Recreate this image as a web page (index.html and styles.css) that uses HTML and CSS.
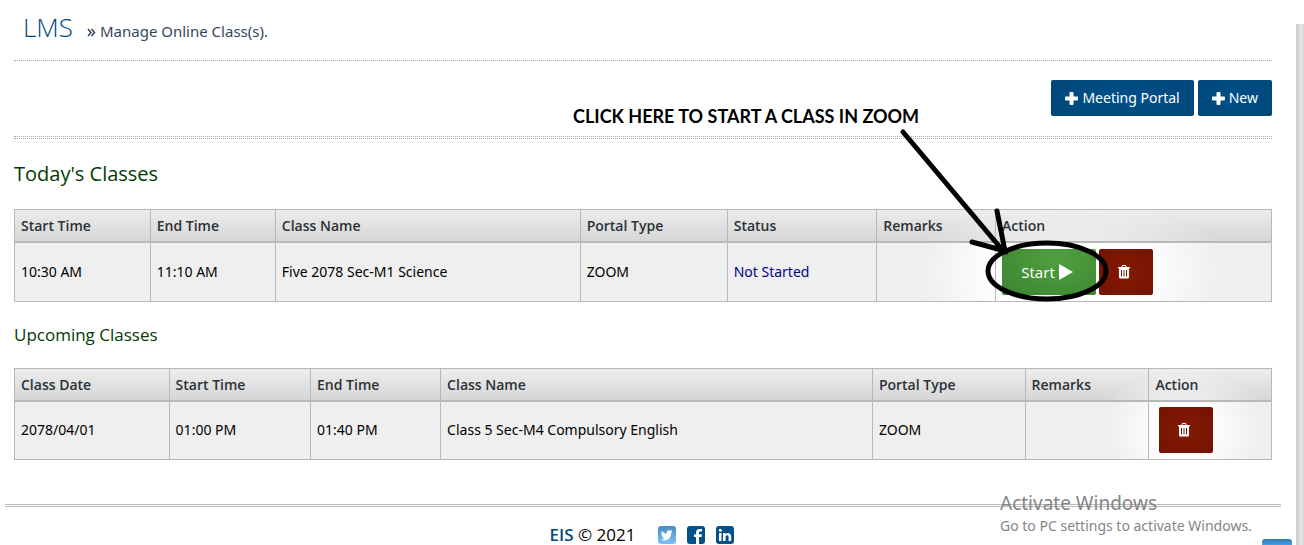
FILE: index.html
```html
<!DOCTYPE html>
<html lang="en">
<head>
<meta charset="utf-8">
<title>LMS - Manage Online Class(s)</title>
<link rel="stylesheet" href="styles.css">
</head>
<body>
<svg class="defs" aria-hidden="true">
  <symbol id="plus" viewBox="0 0 13 13"><path fill="currentColor" d="M4.500 1q0-1 1-1h2q1 0 1 1v3.500H12q1 0 1 1v2q0 1-1 1H8.500V12q0 1-1 1h-2q-1 0-1-1V8.500H1q-1 0-1-1v-2q0-1 1-1h3.500z"/></symbol>
  <symbol id="trash" viewBox="0 0 12 14"><path fill="currentColor" fill-rule="evenodd" d="M4.300 0h3.400l1 2H12v1.300h-1V12q0 1.500-1.400 1.500H2.400Q1 13.500 1 12V3.300H0V2h3.300zM4.900 1l-.5 1h3.200l-.5-1zM3 5v6.500h1V5zm2.500 0v6.500h1V5zM8 5v6.500h1V5z"/></symbol>
</svg>
<div class="page">
  <main class="content">
    <header class="heading">
      <h1>LMS</h1>
      <p class="crumb"><svg class="chevrons" viewBox="0 0 9 9" aria-hidden="true"><path d="M1 1l3 3.500L1 8M4.500 1l3 3.500-3 3.500"/></svg>Manage Online Class(s).</p>
    </header>
    <div class="toolbar">
      <button class="btn"><svg viewBox="0 0 13 13" aria-hidden="true"><use href="#plus"/></svg>Meeting Portal</button>
      <button class="btn"><svg viewBox="0 0 13 13" aria-hidden="true"><use href="#plus"/></svg>New</button>
    </div>
    <h2>Today's Classes</h2>
    <table class="today">
      <colgroup><col class="t1"><col class="t2"><col class="t3"><col class="t4"><col class="t5"><col class="t6"><col></colgroup>
      <thead><tr><th>Start Time</th><th>End Time</th><th>Class Name</th><th>Portal Type</th><th>Status</th><th>Remarks</th><th>Action</th></tr></thead>
      <tbody><tr><td>10:30 AM</td><td>11:10 AM</td><td>Five 2078 Sec-M1 Science</td><td>ZOOM</td><td class="status">Not Started</td><td></td>
        <td><div class="actions">
          <button class="btn start">Start<svg viewBox="0 0 14 16" aria-hidden="true"><path fill="currentColor" d="M0 0l14 8-14 8z"/></svg></button>
          <button class="btn delete" aria-label="Delete class"><svg viewBox="0 0 12 14" aria-hidden="true"><use href="#trash"/></svg></button>
          <div class="callout">
            <p>CLICK HERE TO START A CLASS IN ZOOM</p>
            <svg viewBox="0 0 240 180" aria-hidden="true"><path d="M33 10L134 130M102 120l33 9-8-40"/><ellipse cx="177" cy="149" rx="59" ry="28"/></svg>
          </div>
        </div></td></tr></tbody>
    </table>
    <h3>Upcoming Classes</h3>
    <table class="upcoming">
      <colgroup><col class="u1"><col class="u2"><col class="u3"><col class="u4"><col class="u5"><col class="u6"><col></colgroup>
      <thead><tr><th>Class Date</th><th>Start Time</th><th>End Time</th><th>Class Name</th><th>Portal Type</th><th>Remarks</th><th>Action</th></tr></thead>
      <tbody><tr><td>2078/04/01</td><td>01:00 PM</td><td>01:40 PM</td><td>Class 5 Sec-M4 Compulsory English</td><td>ZOOM</td><td></td>
        <td><div class="actions inset"><button class="btn delete" aria-label="Delete class"><svg viewBox="0 0 12 14" aria-hidden="true"><use href="#trash"/></svg></button></div></td></tr></tbody>
    </table>
  </main>
  <footer class="footer">
    <span><b>EIS</b> © 2021</span>
    <div class="social">
      <a href="#" aria-label="Twitter"><svg viewBox="0 0 18 18"><defs><linearGradient id="tw" x2="0" y2="1"><stop stop-color="#488fbd"/><stop offset="1" stop-color="#7cc0ff"/></linearGradient></defs><rect width="18" height="18" rx="3" fill="url(#tw)"/><path fill="#fff" d="M14.500 5.500l-1.300 1.400c.1 4.500-3 7.500-6.500 7.500-1.400 0-2.500-.4-3.500-1 1.300 0 2.300-.3 3.200-1-1.100-.2-1.800-.8-2.100-1.700h1C4 10.200 3.400 9.300 3.400 8l1 .3C3.300 7.300 3.200 6 3.800 4.900c1.400 1.600 3 2.500 5 2.600-.3-2 .5-3.300 2.200-3.300.7 0 1.200.2 1.600.6l1.500-.5-.8 1.300z"/></svg></a>
      <a href="#" aria-label="Facebook"><svg viewBox="0 0 18 18"><rect width="18" height="18" rx="3" fill="#00508a"/><path fill="#fff" d="M9 18v-7H7V8.300h2V6.500C9 4.300 10.300 3 12.500 3H15v2.600h-1.600c-1 0-1.400.4-1.400 1.200v1.500h2.900l-.4 2.700H12v7z"/></svg></a>
      <a href="#" aria-label="LinkedIn"><svg viewBox="0 0 18 18"><rect width="18" height="18" rx="3" fill="#00508a"/><path fill="#fff" d="M3 7h2.500v8H3zM7 7h2.400v1.200C11 6 15.200 6.500 15.200 10.500V15h-2.600v-4.200c0-2.300-3-2.100-3 0V15H7z"/><circle cx="4.250" cy="4.200" r="1.500" fill="#fff"/></svg></a>
    </div>
  </footer>
  <div class="scrollbar"></div>
  <button class="to-top" aria-label="Back to top"></button>
  <div class="watermark"><p class="wm-title">Activate Windows</p><p>Go to PC settings to activate Windows.</p></div>
</div>
</body>
</html>
```
FILE: styles.css
```css
* { box-sizing: border-box; }
html, body { margin: 0; }
body {
  height: 100vh;
  overflow: hidden;
  background: #fff;
  color: #000;
  font: 14px/20px "Open Sans", "Noto Sans", sans-serif;
}
.defs { position: absolute; width: 0; height: 0; }
.page { position: relative; height: 100vh; overflow: hidden; }
.content { padding: 0 32px 0 14px; }
h1, h2, h3, p { margin: 0; font-weight: 400; }
.heading {
  display: flex;
  align-items: baseline;
  gap: 14px;
  padding: 9px 9px 15px;
  border-bottom: 1px dotted #aaa;
}
h1 { color: #004a7f; font-size: 26px; font-weight: 300; line-height: 36px; }
.crumb { color: #33475c; font-family: "Noto Sans", sans-serif; font-size: 15px; }
.chevrons { width: 9px; height: 9px; margin-right: 4px; fill: none; stroke: #33475c; stroke-width: 1.500; }
.toolbar {
  display: flex;
  justify-content: flex-end;
  gap: 4px;
  padding: 19px 0 20px;
  border-bottom: 1px dotted #aaa;
}
.btn {
  display: inline-flex;
  align-items: center;
  justify-content: center;
  gap: 4px;
  height: 36px;
  padding: 0 14px;
  border: 0;
  border-radius: 2px;
  background: radial-gradient(#00508a, #004678);
  color: #fff;
  font: 14px/20px "Noto Sans", sans-serif;
}
.btn svg { width: 13px; height: 13px; }
h2 {
  margin-top: 1px;
  padding: 22px 0;
  border-top: 1px dotted #aaa;
  color: #003c00;
  font-size: 20px;
  line-height: 26px;
}
h3 { padding: 21px 0; color: #003c00; font-size: 17px; line-height: 24px; }
table { width: 100%; border-collapse: collapse; table-layout: fixed; }
th, td { border: 1px solid #b8b8b8; padding: 0 6px; text-align: left; }
th { height: 32px; padding-top: 1px; border-bottom-width: 2px; color: #2b3236; font-weight: 600; }
td { height: 59px; font-family: "Noto Sans", sans-serif; }
.today td { height: 60px; }
thead tr { background: linear-gradient(#ededed, #d5d5d5); }
tbody tr { background: #efefef; }
.today thead tr { background: radial-gradient(180px 70px at 84% 200%, #fff, transparent), linear-gradient(#ededed, #d5d5d5); }
.today tbody tr { background: radial-gradient(150px 90px at 84% 50%, #fff 50%, #efefef); }
.upcoming thead tr { background: radial-gradient(90px 60px at 93% 180%, #fff, transparent), linear-gradient(#ededed, #d5d5d5); }
.upcoming tbody tr { background: radial-gradient(75px 80px at 93% 50%, #fff 30%, #efefef); }
.t1 { width: 10.8%; }
.t2 { width: 9.95%; }
.t3 { width: 24.25%; }
.t4 { width: 11.7%; }
.t5 { width: 11.9%; }
.t6 { width: 9.45%; }
.u1 { width: 12.3%; }
.u2 { width: 11.25%; }
.u3 { width: 10.35%; }
.u4 { width: 34.35%; }
.u5 { width: 12.15%; }
.u6 { width: 9.85%; }
.status { color: #00008b; }
.actions { position: relative; display: flex; gap: 3px; }
.inset { padding-left: 4px; }
.actions .btn { height: 46px; }
.actions .start { width: 94px; padding: 0 18px 0 14px; background: radial-gradient(at 60% 20%, #4f9f40, #3c8530); font-size: 15px; }
.start svg { width: 14px; height: 16px; }
.delete { width: 54px; padding-right: 18px; background: radial-gradient(#841a04, #741300); }
.delete svg { width: 12px; height: 14px; }
.callout { position: absolute; z-index: 1; top: -143px; left: -429px; width: 350px; pointer-events: none; }
.callout p { font: 700 18px/20px Lato, sans-serif; white-space: nowrap; }
.callout svg {
  position: absolute;
  top: 16px;
  left: 297px;
  width: 240px;
  height: 180px;
  fill: none;
  stroke: #000;
  stroke-width: 5;
  stroke-linecap: round;
}
.footer {
  display: flex;
  align-items: center;
  justify-content: center;
  gap: 23px;
  margin: 44px 23px 0 5px;
  padding-top: 18px;
  border-top: 3px double #bbb;
  font-size: 17px;
  line-height: 20px;
}
.footer > span { margin-left: -2px; }
.footer b { color: #004a7f; font-weight: 600; }
.social { display: flex; gap: 11px; }
.social a, .social svg { display: block; width: 18px; height: 18px; }
.scrollbar { position: absolute; top: 24px; right: 0; bottom: 0; width: 8px; background: linear-gradient(90deg, #ccc, #eaeaea 6px, #ccc 7px, #eee); }
.to-top { position: absolute; right: 12px; bottom: 0; width: 30px; height: 6px; padding: 0; border: 0; border-radius: 3px 3px 0 0; background: linear-gradient(#2e7cb8, #4a9be0); }
.watermark { position: absolute; left: calc(100% - 304px); bottom: 9px; color: #858585; white-space: nowrap; }
.watermark p { font-family: "Noto Sans", sans-serif; }
.watermark .wm-title { font-size: 19px; line-height: 25px; }
```
